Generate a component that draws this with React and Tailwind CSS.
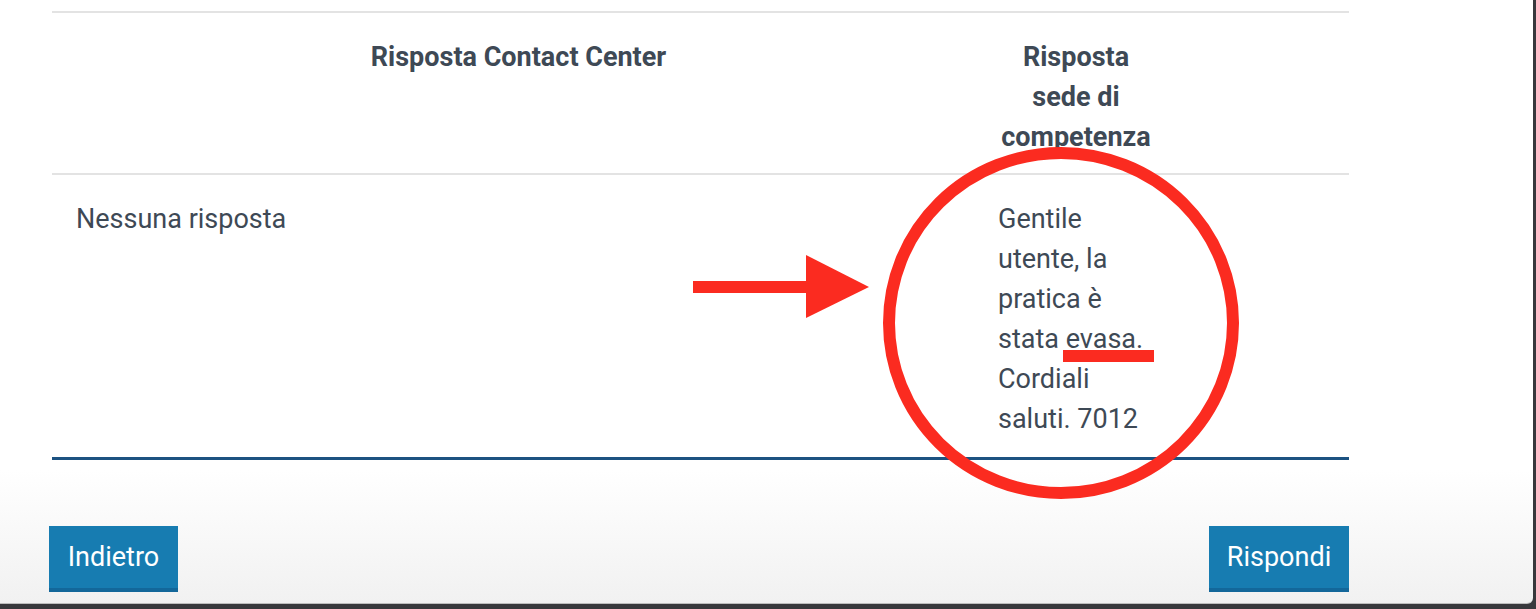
import React from 'react';

const font = { fontFamily: 'Roboto, "Noto Sans", sans-serif' };

const Annotations = () => (
  <svg
    className="pointer-events-none absolute left-0 top-0"
    width="1536"
    height="609"
    viewBox="0 0 1536 609"
  >
    <rect x="693" y="281" width="115" height="12" fill="#fb2b20" />
    <polygon points="806,255 869,287 806,318" fill="#fb2b20" />
    <ellipse cx="1061" cy="323" rx="172" ry="170" fill="none" stroke="#fb2b20" strokeWidth="12" />
    <rect x="1063" y="350" width="91" height="12" fill="#fb2b20" />
  </svg>
);

const Button = ({ children, className = '' }) => (
  <button className={`h-[66px] bg-[#177cb1] border-b-[4px] border-[#13679a] text-white text-[27px] leading-none ${className}`}>
    {children}
  </button>
);

export default function App() {
  return (
    <div className="relative h-[609px] w-[1536px] overflow-hidden bg-[#38383c]" style={font}>
      <div className="flex h-[604px] w-[1533px] flex-col rounded-br-md border-b border-[#bdbdbd] bg-[linear-gradient(to_bottom,#ffffff_78%,#f1f1f1)] pl-[52px] pr-[184px] pt-[11px]">
        <table className="w-[1297px] table-fixed border-collapse text-[#3e4955]">
          <colgroup>
            <col className="w-[933px]" />
            <col className="w-[182px]" />
            <col />
          </colgroup>
          <thead>
            <tr className="border-y-2 border-[#e3e3e3]">
              <th className="px-6 pt-[24px] pb-[16px] align-top text-center text-[27px] font-bold leading-[40px]">
                Risposta Contact Center
              </th>
              <th className="px-[13px] pt-[24px] pb-[16px] align-top text-center text-[27px] font-bold leading-[40px]">
                Risposta sede di competenza
              </th>
              <th />
            </tr>
          </thead>
          <tbody>
            <tr className="border-b-[3px] border-[#1c5281]">
              <td className="px-6 pt-[24px] pb-[18px] align-top text-[27px] leading-[40px]">Nessuna risposta</td>
              <td className="px-[13px] pt-[24px] pb-[18px] align-top text-[27px] leading-[40px]">
                Gentile utente, la pratica è stata evasa. Cordiali saluti. 7012
              </td>
              <td />
            </tr>
          </tbody>
        </table>
        <div className="mt-[66px] flex w-[1300px] -ml-[3px] justify-between">
          <Button className="w-[129px]">Indietro</Button>
          <Button className="w-[140px]">Rispondi</Button>
        </div>
      </div>
      <Annotations />
    </div>
  );
}
